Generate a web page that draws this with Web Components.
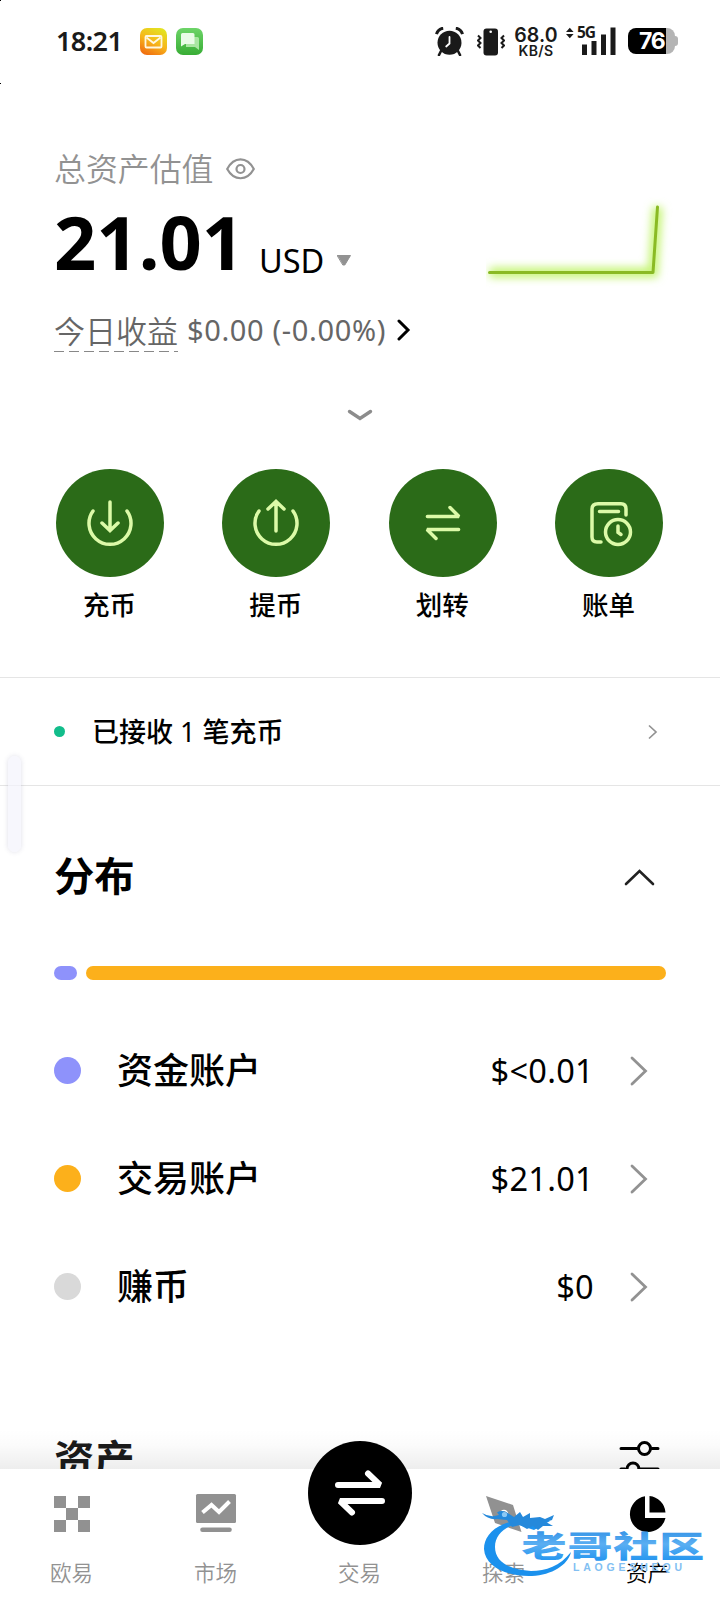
<!DOCTYPE html>
<html lang="zh-CN">
<head>
<meta charset="utf-8">
<title>资产</title>
<style>
html,body{margin:0;padding:0;background:#fff}
body{width:720px;height:1604px;overflow:hidden;font-family:"Noto Sans","Noto Sans CJK SC",sans-serif;color:#000}
</style>
</head>
<body>
<asset-screen></asset-screen>
<script>
const define=(name,html)=>customElements.define(name,class extends HTMLElement{
  constructor(){
    super();
    const t=document.createElement('template');
    t.innerHTML=typeof html==='function'?html(this):html;
    this.attachShadow({mode:'open'}).append(t.content.cloneNode(true));
  }
});

define('status-bar',`
<style>
:host{display:flex;height:83px;box-sizing:border-box;padding:27px 42px 0 56px;color:#1a1a1a;align-items:flex-start}
svg{display:block;flex:none}
.time{width:84px;font-size:27px;font-weight:600;line-height:28px;letter-spacing:-.6px;white-space:nowrap}
.apps{display:flex;gap:9px;padding-top:1px;flex:1}
.speed{width:44px;margin:0 8px 0 9px;text-align:center;font-family:Inter,sans-serif;font-weight:600}
.speed b{display:block;font-weight:600;font-size:19.5px;line-height:17px;letter-spacing:.1px}
.speed i{display:block;font-style:normal;font-size:14px;line-height:13px;letter-spacing:.4px}
.signal{display:grid;width:51px;height:28px}
.signal>*{grid-area:1/1}
.signal span{font:700 15.5px/16px "Noto Sans",sans-serif;padding-left:11px;margin-top:-3px;letter-spacing:-1px}
.bat{display:flex;align-items:center;margin:1px 0 0 11px}
.cell{width:47px;height:26px;border-radius:8px;background:linear-gradient(90deg,#000 38px,#b4b4b4 38px);box-sizing:border-box;padding-left:11px;color:#fff;font:700 23px/26px Inter,sans-serif;letter-spacing:-1.3px}
.tip{width:3px;height:10px;border-radius:0 3px 3px 0;background:#b4b4b4}
</style>
<div class="time">18:21</div>
<div class="apps">
<svg width="27" height="27" viewBox="0 0 27 27"><defs><linearGradient id="m" x1=".2" y1="1" x2=".7" y2="0"><stop stop-color="#f06b10"/><stop offset=".5" stop-color="#f7b61a"/><stop offset="1" stop-color="#e3e221"/></linearGradient></defs><rect width="27" height="27" rx="7" fill="url(#m)"/><rect x="5.500" y="8" width="16" height="11.500" rx="1" fill="none" stroke="#fff8e0" stroke-width="1.800"/><path d="M6.500 9.500l7 5.500 7-5.500" fill="none" stroke="#fff8e0" stroke-width="1.800"/></svg>
<svg width="27" height="27" viewBox="0 0 27 27"><defs><linearGradient id="g" x1="0" y1="0" x2="0" y2="1"><stop stop-color="#6dd468"/><stop offset="1" stop-color="#38ad35"/></linearGradient></defs><rect width="27" height="27" rx="7" fill="url(#g)"/><path d="M10 9h11.500q1.500 0 1.500 1.500V22l-4-3h-9z" fill="#a9e6a2"/><path d="M6.500 5H17q1.500 0 1.500 1.500V16H9l-4 2.500V6.500Q5 5 6.500 5z" fill="#e9fbe7"/></svg>
</div>
<svg width="29" height="29" viewBox="0 0 29 29"><path d="M6 24l-2 4M23 24l2 4" stroke="#1a1a1a" stroke-width="2.600" stroke-linecap="round"/><circle cx="14.500" cy="15.800" r="12" fill="#1a1a1a"/><path d="M1.500 7.200Q3 2 8.200 1.200M20.800 1.200Q26 2 27.500 7.200" fill="none" stroke="#1a1a1a" stroke-width="3"/><path d="M14.500 10v6.500l-3.300 3" fill="none" stroke="#fff" stroke-width="1.800" stroke-linecap="round"/></svg>
<svg width="28" height="29" viewBox="0 0 28 29" style="margin-left:13px"><rect x="6.500" y="1.500" width="14.500" height="27" rx="3" fill="#1a1a1a"/><circle cx="13.700" cy="4.800" r="1.300" fill="#fff"/><path d="M1 8.500l2.500 2.500L1 13.500 3.500 16 1 18.500 3.500 21M27 8.500L24.500 11l2.500 2.500-2.500 2.500 2.500 2.500-2.500 2.500" fill="none" stroke="#1a1a1a" stroke-width="2"/></svg>
<div class="speed"><b>68.0</b><i>KB/S</i></div>
<div class="signal"><svg width="51" height="28" viewBox="0 0 51 28"><path d="M0 5l3.800-4.300L7.600 5zM0 7h7.600l-3.800 4.300z" fill="#1a1a1a"/><path d="M16 17.500h5V28h-5zM25.500 14h5v14h-5zM35 7.500h5V28h-5zM44.500.500h5V28h-5z" fill="#1a1a1a"/></svg><span>5G</span></div>
<div class="bat"><div class="cell">76</div><div class="tip"></div></div>
`);

define('balance-summary',`
<style>
:host{display:block;height:386px;box-sizing:border-box;padding:66px 54px 0}
.label{display:flex;align-items:center;height:40px;font-size:31.900px;line-height:40px;font-weight:350;color:#929292}
.label svg{margin-left:13px}
.main{display:flex;justify-content:space-between;height:100px}
.amount{display:flex;height:100px}
.big{width:205px;font-size:74px;line-height:100px;font-weight:700;letter-spacing:0;margin-top:3px;white-space:nowrap}
.ccy{width:78px;font-size:32.500px;line-height:44px;margin-top:50px;letter-spacing:0}
.caret{margin-top:65px}
.chart{margin:0 -20px 0 0}
.today{display:flex;align-items:center;height:44px;margin-top:20px;color:#666;white-space:nowrap}
.today u{text-decoration:none;font-size:31px;font-weight:350;line-height:41px;width:124px;background:repeating-linear-gradient(90deg,#888 0 10px,transparent 10px 15px) 0 100%/100% 1px no-repeat}
.today span{font-size:29px;line-height:40px;margin:0 0 3px 9px;width:199px;letter-spacing:.64px}
.today svg{margin:0 0 2px 11px}
.more{display:block;margin:55px auto 0}
svg{display:block;flex:none;fill:none;stroke-linecap:round}
</style>
<div class="label">总资产估值<svg width="29" height="22" viewBox="0 0 29 22" stroke="#929292" stroke-width="2.200"><path d="M1.200 11C8-1.800 21-1.800 27.800 11 21 23.300 8 23.300 1.200 11z"/><circle cx="14.500" cy="11" r="4"/></svg></div>
<div class="main"><div class="amount"><div class="big">21.01</div><div class="ccy">USD</div><svg class="caret" width="14" height="13"><path d="M.500 1.500h13L7.800 11h-1.600z" fill="#929292" stroke="#929292"/></svg></div>
<svg class="chart" width="200" height="100" viewBox="0 0 200 100"><defs><filter id="b" filterUnits="userSpaceOnUse" x="0" y="-10" width="200" height="120"><feGaussianBlur stdDeviation="4.500"/></filter></defs><path d="M3.500 83.500H167L171.500 18" stroke="#c3f470" stroke-width="10" filter="url(#b)" stroke-linecap="butt"/><path d="M3.500 83.500H167L171.500 18" stroke="#8aba24" stroke-width="3" stroke-linejoin="round"/></svg></div>
<div class="today"><u>今日收益</u><span>$0.00 (-0.00%)</span><svg width="14" height="22" viewBox="0 0 14 22" stroke="#000" stroke-width="3" stroke-linecap="butt"><path d="M2 2l9 9-9 9"/></svg></div>
<svg class="more" width="28" height="16" viewBox="0 0 28 16" stroke="#8c8c8c" stroke-width="3.400"><path d="M3.500 3.500L14 10.500 24.500 3.500"/></svg>
`);

const transfer='<path d="M-15.600-6.400H16L7-15.500M15.600 6.400H-16L-7 15.500" stroke-linejoin="bevel"/>';
const actionIcons={
 deposit:'<path d="M-17-12A21 21 0 1 0 17-12M0-21V7M-8 0L0 7.500 8 0"/>',
 withdraw:'<path d="M-17-12A21 21 0 1 0 17-12M0 8V-21M-8-14L0-21.500 8-14"/>',
 transfer,
 bill:'<path d="M17-8V-14Q17-19.300 12-19.300H-11Q-17-19.300-17-14V14Q-17 19-12 19H-8M-9.500-11.500H9.500"/><circle cx="9" cy="9" r="12.500"/><path d="M9 3V9.300L12 11.500"/>'
};
define('action-button',el=>`
<style>
:host{display:flex;flex-direction:column;align-items:center;width:108px}
svg{display:block;background:#2b6b18;border-radius:50%;fill:none;stroke:#dcfaa8;stroke-width:3.500;stroke-linecap:round}
div{font-size:26.500px;line-height:36px;font-weight:450;margin:10px 0 0 -1px;white-space:nowrap}
</style>
<svg width="108" height="108" viewBox="-54 -54 108 108">${actionIcons[el.getAttribute('icon')]}</svg><div><slot></slot></div>`);

define('notice-row',`
<style>
:host{display:flex;align-items:center;box-sizing:border-box;height:109px;border-top:1px solid #e5e5e5;border-bottom:1px solid #e5e5e5;padding:0 62px 0 54px}
i{width:11px;height:11px;border-radius:50%;background:#12bd8b;margin-right:27px}
span{flex:1;font-size:27px;line-height:40px;font-weight:450}
</style>
<i></i><span><slot></slot></span><svg width="10" height="16" viewBox="0 0 10 16" fill="none" stroke="#929292" stroke-width="1.700"><path d="M1 1.500L8 8 1 14.500"/></svg>`);

define('account-row',el=>`
<style>
:host{display:flex;align-items:center;height:108px;font-weight:450}
i{width:27px;height:27px;border-radius:50%;background:${el.getAttribute('color')};margin-right:36px}
span{flex:1;font-size:36px;line-height:50px;margin-top:2px}
b{font-weight:450;font-size:32.500px;line-height:50px;letter-spacing:.3px;margin:2px 36px 0 0}
svg{margin-top:2px}
</style>
<i></i><span><slot></slot></span><b><slot name="value"></slot></b><svg width="18" height="30" viewBox="0 0 18 30" fill="none" stroke="#929292" stroke-width="2.800" stroke-linecap="round"><path d="M2 2L15.500 15 2 28"/></svg>`);

define('asset-distribution',`
<style>
:host{display:block;height:640px;box-sizing:border-box;padding:60px 54px 0}
header,footer{display:flex;justify-content:space-between;align-items:center;height:60px;font-size:40.300px;font-weight:700;line-height:60px}
header{padding-right:11px}
header svg{margin-top:3px}
.bar{display:flex;gap:9px;height:14px;margin:60px 0 36px}
.bar i{border-radius:7px;background:#8e92fb;width:23px}
.bar i+i{background:#fcb01b;flex:1}
.rows{padding-right:18px}
footer{margin-top:89px;color:#1b1b1b;padding-right:6px}
footer svg{margin-top:1px;overflow:visible}
</style>
<header>分布<svg width="31" height="20" viewBox="0 0 31 20" fill="none" stroke="#222" stroke-width="2.600" stroke-linecap="round"><path d="M2 16L15.500 3 29 16"/></svg></header>
<div class="bar"><i></i><i></i></div>
<div class="rows">
<account-row color="#8e92fb">资金账户<span slot="value">$&lt;0.01</span></account-row>
<account-row color="#fcb01b">交易账户<span slot="value">$21.01</span></account-row>
<account-row color="#d9d9d9">赚币<span slot="value">$0</span></account-row>
</div>
<footer>资产<svg width="41" height="34" viewBox="0 0 41 34" fill="none" stroke="#000" stroke-width="3" stroke-linecap="round"><path d="M2 5.500H18M33 5.500H39M2 26H6M20 26H39"/><circle cx="25.500" cy="5.500" r="6"/><circle cx="14" cy="26" r="6"/></svg></footer>`);

const tabIcons={
 okx:'<path fill="#919191" d="M-18-18h12v12h-12zM6-18h12v12H6zM-6-6H6V6H-6zM-18 6h12v12h-12zM6 6h12v12H6z"/>',
 market:'<rect x="-20" y="-20" width="40" height="29" rx="1.500" fill="#919191"/><path d="M-13.500-1.500L-4.500-9 3-2 13.500-12.500" fill="none" stroke="#fff" stroke-width="4"/><path d="M-13.500 15.700H13.500" stroke="#919191" stroke-width="4.600" stroke-linecap="round"/>',
 trade:'<circle r="52" cy="-21" fill="#000"/><g transform="translate(0 -21)" fill="none" stroke="#fff" stroke-width="6" stroke-linecap="round" stroke-linejoin="bevel"><path d="M-22-8H20L8-19.500M22 8H-20L-8 19.500"/></g>',
 explore:'<path d="M-18-18L9-9 17.500 18-9 9z" fill="#919191"/><circle r="3.500" fill="none" stroke="#fff" stroke-width="1.500"/>',
 assets:'<path d="M-3-17.700A18 18 0 1 0 17.500 4H-3zM1.500-18V-1.500H17.500A18 18 0 0 0 1.500-18z"/>'
};
define('nav-tab',el=>`
<style>
:host{display:flex;flex:1;flex-direction:column;align-items:center;padding-top:20px;color:#929292}
:host([active]){color:#000}
svg{display:block;overflow:visible}
div{font-size:21.500px;line-height:30px;font-weight:350;margin:19px 0 0 -1px}
</style>
<svg width="50" height="50" viewBox="-25 -25 50 50">${tabIcons[el.getAttribute('icon')]}</svg><div><slot></slot></div>`);

define('bottom-nav',`
<style>
:host{display:flex;position:absolute;left:0;right:0;bottom:0;height:135px;background:#fff}
:host::before{content:"";position:absolute;left:0;right:0;top:-40px;height:40px;background:linear-gradient(transparent,rgba(0,0,0,.015) 40%,rgba(0,0,0,.07))}
</style>
<nav-tab icon="okx">欧易</nav-tab><nav-tab icon="market">市场</nav-tab><nav-tab icon="trade">交易</nav-tab><nav-tab icon="explore">探索</nav-tab><nav-tab icon="assets" active>资产</nav-tab>`);

define('community-mark',`
<style>
:host{display:block;position:absolute;left:480px;top:1505px;width:224px;height:75px}
svg{display:block;overflow:visible}
</style>
<svg width="224" height="75" viewBox="480 1505 224 75">
<defs><linearGradient id="w" x1="0" y1="0" x2="0" y2="1"><stop stop-color="#2185e0"/><stop offset=".5" stop-color="#5aaef2"/><stop offset="1" stop-color="#168fef"/></linearGradient></defs>
<path d="M515 1521C493 1525 484 1537 484 1549C485 1567 508 1577 532 1576C552 1575 568 1565 571 1552C560 1566 546 1571 531 1571C510 1570 495 1562 495 1547C495 1536 503 1528 516 1524L534 1530L550 1521Z" fill="#1b91ed"/>
<path d="M482 1513Q490 1518 499 1515L497 1512.500Q501 1510 506 1512L514 1517 520 1512 523 1517 530 1513 530 1518 540 1517 545 1519 554 1515 552 1520 546 1522 553 1526 543 1526 538 1530 533 1526 527 1529 520 1525 512 1527 507 1520 497 1519Q488 1520 482 1513Z" fill="#2589db"/>
<circle cx="504.500" cy="1514.500" r="2.600" fill="#8bc8f5"/>
<text transform="translate(521.500 1557) scale(1.5 1)" font-family="Noto Sans CJK SC,sans-serif" font-size="30" font-weight="900" fill="url(#w)" letter-spacing=".6">老哥社区</text>
<text x="573" y="1570.500" font-family="Liberation Sans,sans-serif" font-size="10.500" font-weight="700" textLength="109" fill="#83bff2">LAOGESHEQU</text>
</svg>`);

define('asset-screen',`
<style>
:host{display:block;position:relative;width:720px;height:1604px;overflow:hidden;background:#fff}
.actions{display:flex;justify-content:space-between;height:208px;box-sizing:border-box;padding:0 57px 0 56px}
.edge{position:absolute;left:8px;top:756px;width:13px;height:96px;border-radius:7px;background:rgba(244,244,252,.7);box-shadow:0 0 5px rgba(70,70,130,.18)}
.px{position:absolute;left:0;width:1px;height:1px;background:#000}
</style>
<status-bar></status-bar>
<balance-summary></balance-summary>
<div class="actions"><action-button icon="deposit">充币</action-button><action-button icon="withdraw">提币</action-button><action-button icon="transfer">划转</action-button><action-button icon="bill">账单</action-button></div>
<notice-row>已接收 1 笔充币</notice-row>
<asset-distribution></asset-distribution>
<bottom-nav></bottom-nav>
<community-mark></community-mark>
<div class="edge"></div>
<div class="px" style="top:0"></div><div class="px" style="top:83px"></div>`);
</script>
</body>
</html>
